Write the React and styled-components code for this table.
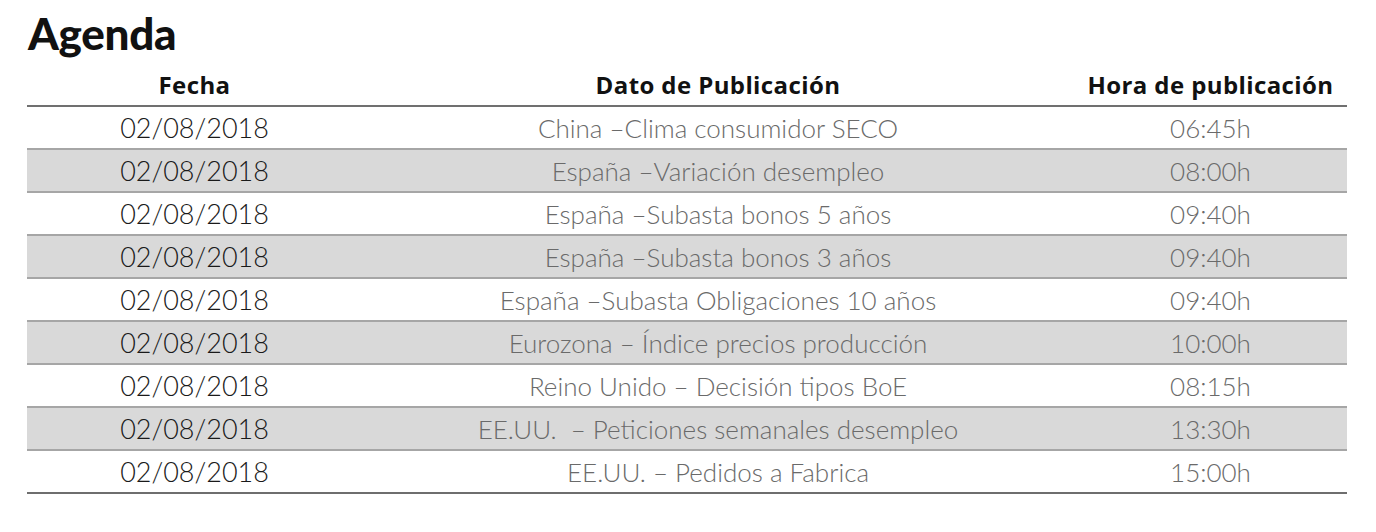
import React from "react";
import styled, { createGlobalStyle } from "styled-components";

const GlobalStyle = createGlobalStyle`
  html, body {
    margin: 0;
    padding: 0;
    background: #ffffff;
  }
  body {
    font-family: Lato, "Open Sans", sans-serif;
  }
`;

const Page = styled.div`
  width: 1376px;
  height: 532px;
  padding: 8px 29px 0 27px;
  box-sizing: border-box;
`;

const Title = styled.h1`
  margin: 0 0 0 1px;
  font-size: 44px;
  font-weight: 900;
  line-height: 50px;
  color: #111;
  letter-spacing: -0.3px;
`;

const Grid = styled.div`
  display: grid;
  grid-template-columns: 335px 712px 273px;
  width: 1320px;
`;

const HeaderCell = styled.div`
  height: 49px;
  display: flex;
  align-items: center;
  justify-content: center;
  padding-top: 5px;
  box-sizing: border-box;
  font-family: "Open Sans", Roboto, sans-serif;
  font-size: 24px;
  font-weight: 700;
  letter-spacing: 0.4px;
  color: #111;
  border-bottom: 2px solid #707070;
`;

const Cell = styled.div`
  height: 43px;
  display: flex;
  align-items: center;
  justify-content: center;
  box-sizing: border-box;
  font-size: ${(p) => (p.$dark ? "27px" : "26px")};
  font-weight: 300;
  white-space: pre;
  color: ${(p) => (p.$dark ? "#1a1a1a" : "#6a6a6a")};
  background: ${(p) => (p.$shade ? "#d9d9d9" : "#ffffff")};
  border-bottom: 2px solid ${(p) => (p.$last ? "#6e6e6e" : "#a6a6a6")};
`;

const rows = [
  ["China –Clima consumidor SECO", "06:45h"],
  ["España –Variación desempleo", "08:00h"],
  ["España –Subasta bonos 5 años", "09:40h"],
  ["España –Subasta bonos 3 años", "09:40h"],
  ["España –Subasta Obligaciones 10 años", "09:40h"],
  ["Eurozona – Índice precios producción", "10:00h"],
  ["Reino Unido – Decisión tipos BoE", "08:15h"],
  ["EE.UU.  – Peticiones semanales desempleo", "13:30h"],
  ["EE.UU. – Pedidos a Fabrica", "15:00h"],
];

export default function App() {
  return (
    <Page>
      <GlobalStyle />
      <Title>Agenda</Title>
      <Grid>
        <HeaderCell>Fecha</HeaderCell>
        <HeaderCell>Dato de Publicación</HeaderCell>
        <HeaderCell>Hora de publicación</HeaderCell>
        {rows.map(([dato, hora], i) => {
          const shade = i % 2 === 1;
          const last = i === rows.length - 1;
          return (
            <React.Fragment key={i}>
              <Cell $dark $shade={shade} $last={last}>02/08/2018</Cell>
              <Cell $shade={shade} $last={last}>{dato}</Cell>
              <Cell $shade={shade} $last={last}>{hora}</Cell>
            </React.Fragment>
          );
        })}
      </Grid>
    </Page>
  );
}
